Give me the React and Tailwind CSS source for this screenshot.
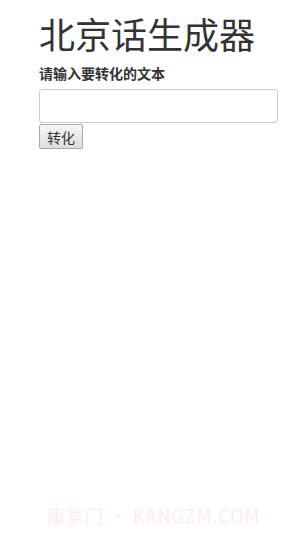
export default function App() {
  return (
    <div
      className="relative min-h-[536px] bg-white text-[#333] pl-[39px] pr-[26px]"
      style={{ fontFamily: '"Noto Sans CJK SC", "Noto Sans", sans-serif' }}
    >
      <h1 className="pt-[13px] pb-[10px] text-[36px] leading-[40px] font-normal">北京话生成器</h1>
      <label className="block text-[14px] leading-[20px] font-bold mb-[6px]">请输入要转化的文本</label>
      <input
        type="text"
        className="block w-full h-[34px] border border-[#ccc] rounded-[3px] px-3 text-sm outline-none"
      />
      <button className="block mt-[1px] h-[25px] w-[44px] text-[14px] leading-[20px] text-[#333] border border-[#a9a9a9] rounded-[2px] bg-gradient-to-b from-[#f6f6f6] to-[#dedede]">
        转化
      </button>
      <div className="absolute left-[47px] top-[503px] text-[18px] leading-[24px] tracking-[1px] text-[#fdeaf7]">
        康掌门 • KANGZM.COM
      </div>
    </div>
  );
}
